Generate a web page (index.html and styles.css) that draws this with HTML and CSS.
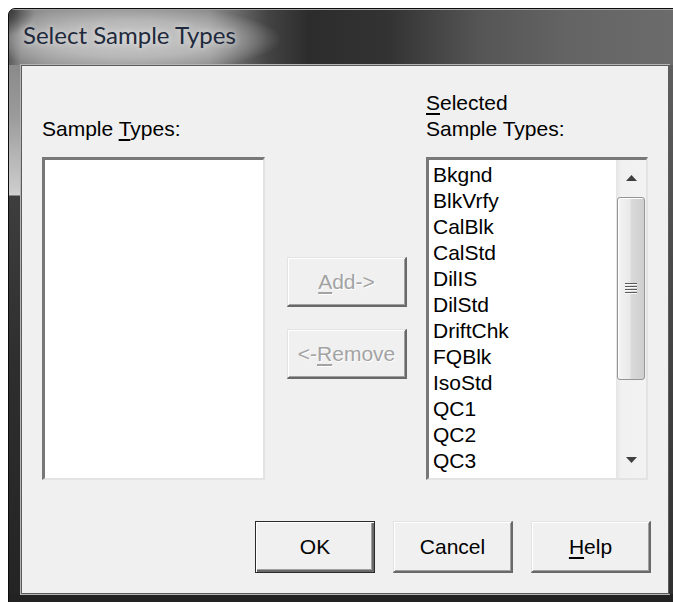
FILE: index.html
```html
<!DOCTYPE html>
<html>
<head>
<meta charset="utf-8">
<title>Select Sample Types</title>
<link rel="stylesheet" href="styles.css">
</head>
<body>
<div class="window">
  <div class="titlebar"><span class="title">Select Sample Types</span></div>
  <div class="frame-row">
    <div class="edge edge-left"></div>
    <div class="client">
      <div class="picker">
        <div class="caption caption-left">Sample <u>T</u>ypes:</div>
        <div class="caption caption-right"><u>S</u>elected<br>Sample Types:</div>
        <div class="listbox"></div>
        <div class="movers">
          <button class="btn" disabled><u>A</u>dd-&gt;</button>
          <button class="btn" disabled>&lt;-<u>R</u>emove</button>
        </div>
        <div class="listbox listbox-scroll">
          <ul class="items">
            <li>Bkgnd</li>
            <li>BlkVrfy</li>
            <li>CalBlk</li>
            <li>CalStd</li>
            <li>DilIS</li>
            <li>DilStd</li>
            <li>DriftChk</li>
            <li>FQBlk</li>
            <li>IsoStd</li>
            <li>QC1</li>
            <li>QC2</li>
            <li>QC3</li>
            <li>Sample</li>
          </ul>
          <div class="vscroll">
            <div class="sb-btn">
              <svg width="11" height="6" viewBox="0 0 11 6"><polygon points="0,6 5.5,0 11,6" fill="#404040"/></svg>
            </div>
            <div class="sb-thumb">
              <svg width="12" height="11" viewBox="0 0 12 11">
                <g stroke-width="1">
                  <line x1="0" y1="0.5" x2="12" y2="0.5" stroke="#5a5a5a"/>
                  <line x1="0" y1="1.5" x2="12" y2="1.5" stroke="#fafafa"/>
                  <line x1="0" y1="3.5" x2="12" y2="3.5" stroke="#5a5a5a"/>
                  <line x1="0" y1="4.5" x2="12" y2="4.5" stroke="#fafafa"/>
                  <line x1="0" y1="6.5" x2="12" y2="6.5" stroke="#5a5a5a"/>
                  <line x1="0" y1="7.5" x2="12" y2="7.5" stroke="#fafafa"/>
                  <line x1="0" y1="9.5" x2="12" y2="9.5" stroke="#5a5a5a"/>
                  <line x1="0" y1="10.5" x2="12" y2="10.5" stroke="#fafafa"/>
                </g>
              </svg>
            </div>
            <div class="sb-track"></div>
            <div class="sb-btn">
              <svg width="11" height="6" viewBox="0 0 11 6"><polygon points="0,0 11,0 5.5,6" fill="#404040"/></svg>
            </div>
          </div>
        </div>
      </div>
      <div class="actions">
        <button class="btn btn-default">OK</button>
        <button class="btn">Cancel</button>
        <button class="btn"><u>H</u>elp</button>
      </div>
    </div>
    <div class="edge edge-right"></div>
  </div>
  <div class="edge-bottom"></div>
</div>
</body>
</html>
```

FILE: styles.css
```css
html, body {
  margin: 0;
  padding: 0;
  overflow: hidden;
  background: #fff;
}

body {
  padding: 8px 0 0 8px;
}

/* Dialog window with glass frame */
.window {
  width: 674px;
  box-sizing: border-box;
  border: 1px solid #0d0d0d;
  border-radius: 7px 7px 0 0;
  overflow: hidden;
  background: #262626;
  font-family: "Liberation Sans", Arial, sans-serif;
  font-size: 21px;
  color: #000;
}

.titlebar {
  height: 56px;
  box-sizing: border-box;
  padding: 12px 0 0 14px;
  background:
    radial-gradient(circle 26px at 0 0, rgba(50, 50, 50, 0.85), rgba(50, 50, 50, 0)),
    radial-gradient(ellipse 150px 34px at 122px 30px, rgba(206, 206, 206, 0.95) 0%, rgba(192, 192, 192, 0.8) 55%, rgba(170, 170, 170, 0) 100%),
    linear-gradient(90deg, #5c5c5c 0px, #888 12px, #939393 40px, #8c8c8c 200px, #444 258px, #2c2c2c 300px, #333 380px, #555 470px, #646464 560px, #6c6c6c 672px);
  box-shadow: inset 0 1px 0 #a3a3a3;
}

.title {
  font-family: Lato, "Open Sans", sans-serif;
  font-size: 24px;
  line-height: 1.2;
  color: #1f2a3c;
  text-shadow: 0 0 6px rgba(235, 235, 235, 0.9);
}

.frame-row {
  display: flex;
}

.edge {
  width: 12px;
}

.edge-left {
  background: linear-gradient(180deg, #8a8a8a 0px, #9a9a9a 50px, #cccccc 126px, #d2d2d2 130px, #3e3e3e 131px, #2e2e2e 300px, #242424 100%);
}

.edge-right {
  background: linear-gradient(180deg, #5e5e5e 0px, #4a4a4a 200px, #303030 100%);
}

.edge-bottom {
  height: 12px;
  background: #222;
}

/* Client area */
.client {
  width: 646px;
  height: 527px;
  border: 1px solid #5c5c5c;
  outline: 1px solid #b4b4b4;
  background: #f0f0f0;
  display: flex;
  flex-direction: column;
}

.picker {
  display: grid;
  grid-template-columns: 223px 1fr 222px;
  grid-template-rows: auto 323px;
  row-gap: 15px;
  padding: 24px 20px 0 20px;
}

.caption {
  line-height: 26px;
  align-self: end;
}

.caption-right {
  grid-column: 3;
}

u {
  text-decoration-thickness: 1.5px;
  text-underline-offset: 3px;
}

.listbox {
  box-sizing: border-box;
  border-style: solid;
  border-width: 3px 2px 2px 3px;
  border-color: #787878 #e3e3e3 #e3e3e3 #787878;
  background: #fff;
}

.listbox-scroll {
  display: flex;
}

.items {
  flex: 1;
  margin: 0;
  padding: 2px 0 0 4px;
  list-style: none;
  overflow: hidden;
  line-height: 26px;
}

/* Vertical scrollbar */
.vscroll {
  width: 30px;
  display: flex;
  flex-direction: column;
  background: linear-gradient(90deg, #e4e4e4 0px, #f1f1f1 5px, #f2f2f2 100%);
}

.sb-btn {
  height: 36px;
  display: flex;
  align-items: center;
  justify-content: center;
}

.sb-thumb {
  margin: 1px 1px 0;
  height: 183px;
  box-sizing: border-box;
  border: 1px solid #959595;
  border-radius: 3px;
  background: linear-gradient(90deg, #f4f4f4 0%, #e9e9e9 45%, #d9d9d9 52%, #cfcfcf 100%);
  box-shadow: inset 1px 1px 0 #fff;
  display: flex;
  align-items: center;
  justify-content: center;
}

.sb-track {
  flex: 1;
}

/* Push buttons */
.btn {
  font: inherit;
  color: #000;
  padding: 0;
  margin: 0;
  background: #f0f0f0;
  border-style: solid;
  border-width: 1px 2px 2px 1px;
  border-color: #e3e3e3 #696969 #696969 #e3e3e3;
  box-shadow: inset 1px 1px 0 #fff, inset -1px -1px 0 #a0a0a0;
  line-height: 26px;
}

.btn:disabled {
  color: #a3a3a3;
  text-shadow: 1px 1px 0 #fff;
}

.btn-default {
  border: 1px solid #2a2a2a;
  box-shadow: inset 1px 1px 0 #fff, inset -2px -2px 0 #696969, inset -3px -3px 0 #a0a0a0;
}

.movers {
  display: flex;
  flex-direction: column;
  align-items: flex-start;
  gap: 22px;
  padding: 100px 0 0 22px;
}

.movers .btn {
  width: 120px;
  height: 50px;
}

.actions {
  display: flex;
  justify-content: flex-end;
  gap: 18px;
  padding: 41px 17px 0 0;
}

.actions .btn {
  width: 120px;
  height: 52px;
}
```
